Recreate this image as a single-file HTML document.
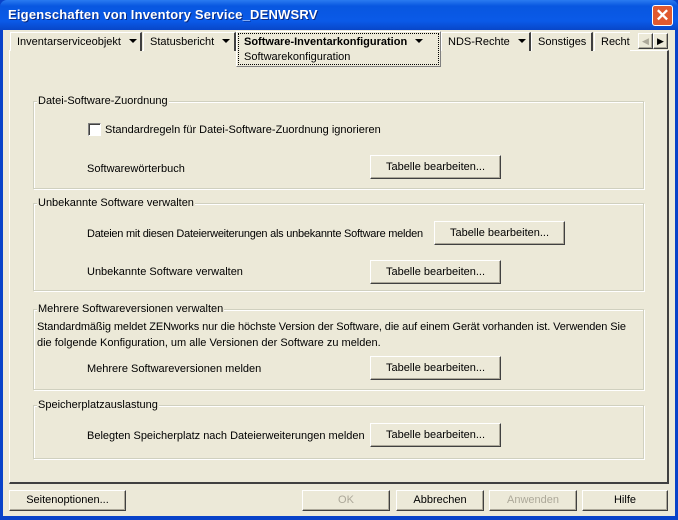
<!DOCTYPE html>
<html><head><meta charset="utf-8"><style>
*{box-sizing:border-box;margin:0;padding:0}
body{width:678px;height:520px;overflow:hidden;background:#0842c9;font-family:"Liberation Sans",sans-serif;font-size:11px;color:#000;position:relative}
.a{position:absolute}
#title{left:0;top:0;width:678px;height:30px;background:linear-gradient(#2a7bf0,#0857e0 20%,#0a5ae8 70%,#0846c8);border-radius:7px 7px 0 0}
#title span{position:absolute;left:8px;top:7px;color:#fff;font-weight:bold;font-size:13px;letter-spacing:0.2px;text-shadow:1px 1px #0a2a80}
#close{left:652px;top:5px;width:21px;height:21px;background:#e0592f;border:1px solid #fff;border-radius:3px;color:#fff;font-size:17px;font-weight:bold;text-align:center;line-height:19px}
#client{left:3px;top:30px;width:672px;height:486px;background:#ece9d8}
.tab{top:32px;height:19px;border:1px solid #fff;border-bottom:none;border-right:2px solid #404040;background:#ece9d8;padding:3px 0 0 6px;white-space:nowrap;overflow:hidden}
.arr{display:inline-block;width:0;height:0;border-left:4px solid transparent;border-right:4px solid transparent;border-top:4px solid #000;margin-left:8px;vertical-align:2px}
#panel{left:9px;top:50px;width:660px;height:434px;border-top:1px solid #fff;border-left:1px solid #fff;border-right:2px solid #404040;border-bottom:2px solid #404040}
.grp{border:1px solid #d0d0bf;box-shadow:inset 1px 1px #fff,1px 1px #fff}
.lg{background:#ece9d8;padding:0 1px;top:-7px;left:3px;position:absolute;white-space:nowrap}
.btn{background:#ece9d8;border-top:1px solid #fff;border-left:1px solid #fff;border-right:1px solid #404040;border-bottom:1px solid #404040;box-shadow:inset -1px -1px #aca899;text-align:center;line-height:22px}
.dis{color:#aca899}
.t{white-space:nowrap}
</style></head><body>
<div id="title" class="a"><span>Eigenschaften von Inventory Service_DENWSRV</span></div>
<div id="close" class="a">✕</div>
<div id="client" class="a"></div>
<div id="panel" class="a"></div>
<div class="a tab" style="left:10px;width:132px">Inventarserviceobjekt<span class="arr"></span></div>
<div class="a tab" style="left:143px;width:93px">Statusbericht<span class="arr"></span></div>
<div class="a" style="left:236px;top:31px;width:205px;height:36px;background:#ece9d8;border:1px solid #fff;border-right:1px solid #808080;border-bottom:1px solid #808080"></div>
<div class="a" style="left:238px;top:33px;width:201px;height:32px;border:1px dotted #000"></div>
<div class="a t" style="left:244px;top:36px;font-weight:bold">Software-Inventarkonfiguration<span class="arr"></span></div>
<div class="a t" style="left:244px;top:51px">Softwarekonfiguration</div>
<div class="a tab" style="left:441px;width:90px">NDS-Rechte<span class="arr"></span></div>
<div class="a tab" style="left:531px;width:62px">Sonstiges</div>
<div class="a tab" style="left:594px;width:36px;border-right:none">Recht</div>
<div class="a btn" style="left:638px;top:33px;width:15px;height:16px;line-height:14px;color:#aca899;font-size:9px">◀</div>
<div class="a btn" style="left:653px;top:33px;width:15px;height:16px;line-height:14px;font-size:9px">▶</div>

<div class="a grp" style="left:33px;top:101px;width:611px;height:88px"><span class="lg">Datei-Software-Zuordnung</span></div>
<div class="a" style="left:88px;top:123px;width:13px;height:13px;border:1px solid #1c5180;border-color:#808080 #fff #fff #808080;background:#fff;box-shadow:inset 1px 1px #404040"></div>
<div class="a t" style="left:105px;top:124px">Standardregeln für Datei-Software-Zuordnung ignorieren</div>
<div class="a t" style="left:87px;top:163px">Softwarewörterbuch</div>
<div class="a btn" style="left:370px;top:155px;width:131px;height:24px">Tabelle bearbeiten...</div>

<div class="a grp" style="left:33px;top:203px;width:611px;height:88px"><span class="lg">Unbekannte Software verwalten</span></div>
<div class="a t" style="left:87px;top:228px;letter-spacing:-0.25px">Dateien mit diesen Dateierweiterungen als unbekannte Software melden</div>
<div class="a btn" style="left:434px;top:221px;width:131px;height:24px">Tabelle bearbeiten...</div>
<div class="a t" style="left:87px;top:266px">Unbekannte Software verwalten</div>
<div class="a btn" style="left:370px;top:260px;width:131px;height:24px">Tabelle bearbeiten...</div>

<div class="a grp" style="left:33px;top:309px;width:611px;height:81px"><span class="lg">Mehrere Softwareversionen verwalten</span></div>
<div class="a t" style="left:37px;top:321px;letter-spacing:-0.1px">Standardmäßig meldet ZENworks nur die höchste Version der Software, die auf einem Gerät vorhanden ist. Verwenden Sie</div>
<div class="a t" style="left:37px;top:337px">die folgende Konfiguration, um alle Versionen der Software zu melden.</div>
<div class="a t" style="left:87px;top:363px">Mehrere Softwareversionen melden</div>
<div class="a btn" style="left:370px;top:356px;width:131px;height:24px">Tabelle bearbeiten...</div>

<div class="a grp" style="left:33px;top:405px;width:611px;height:54px"><span class="lg">Speicherplatzauslastung</span></div>
<div class="a t" style="left:87px;top:430px">Belegten Speicherplatz nach Dateierweiterungen melden</div>
<div class="a btn" style="left:370px;top:423px;width:131px;height:24px">Tabelle bearbeiten...</div>

<div class="a btn" style="left:9px;top:490px;width:117px;height:21px;line-height:19px">Seitenoptionen...</div>
<div class="a btn dis" style="left:302px;top:490px;width:88px;height:21px;line-height:19px">OK</div>
<div class="a btn" style="left:396px;top:490px;width:88px;height:21px;line-height:19px">Abbrechen</div>
<div class="a btn dis" style="left:489px;top:490px;width:88px;height:21px;line-height:19px">Anwenden</div>
<div class="a btn" style="left:582px;top:490px;width:86px;height:21px;line-height:19px">Hilfe</div>
</body></html>
